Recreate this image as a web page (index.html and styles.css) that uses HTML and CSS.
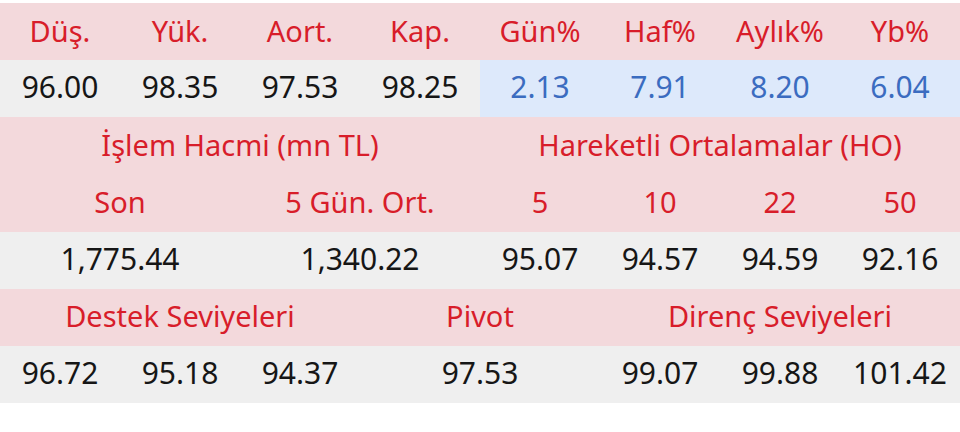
FILE: index.html
```html
<!DOCTYPE html>
<html lang="tr">
<head>
<meta charset="utf-8">
<title>Teknik Veriler</title>
<link rel="stylesheet" href="styles.css">
</head>
<body>
<table class="data">
  <colgroup>
    <col><col><col><col><col><col><col><col>
  </colgroup>
  <tbody>
    <tr class="head">
      <td>Düş.</td><td>Yük.</td><td>Aort.</td><td>Kap.</td>
      <td>Gün%</td><td>Haf%</td><td>Aylık%</td><td>Yb%</td>
    </tr>
    <tr class="vals">
      <td>96.00</td><td>98.35</td><td>97.53</td><td>98.25</td>
      <td class="pct">2.13</td><td class="pct">7.91</td><td class="pct">8.20</td><td class="pct">6.04</td>
    </tr>
    <tr class="head">
      <td colspan="4">İşlem Hacmi (mn TL)</td>
      <td colspan="4">Hareketli Ortalamalar (HO)</td>
    </tr>
    <tr class="head">
      <td colspan="2">Son</td><td colspan="2">5 Gün. Ort.</td>
      <td>5</td><td>10</td><td>22</td><td>50</td>
    </tr>
    <tr class="vals">
      <td colspan="2">1,775.44</td><td colspan="2">1,340.22</td>
      <td>95.07</td><td>94.57</td><td>94.59</td><td>92.16</td>
    </tr>
    <tr class="head">
      <td colspan="3">Destek Seviyeleri</td>
      <td colspan="2">Pivot</td>
      <td colspan="3">Direnç Seviyeleri</td>
    </tr>
    <tr class="vals">
      <td>96.72</td><td>95.18</td><td>94.37</td>
      <td colspan="2">97.53</td>
      <td>99.07</td><td>99.88</td><td>101.42</td>
    </tr>
  </tbody>
</table>
</body>
</html>
```

FILE: styles.css
```css
html, body {
  margin: 0;
  padding: 0;
  background: #ffffff;
}

body {
  padding-top: 3px;
  font-family: "Noto Sans", "Open Sans", sans-serif;
}

.data {
  width: 960px;
  table-layout: fixed;
  border-collapse: collapse;
  border-spacing: 0;
}

.data col {
  width: 120px;
}

.data td {
  height: 57.15px;
  padding: 0 0 3px 0;
  box-sizing: border-box;
  text-align: center;
  vertical-align: middle;
  line-height: 1;
  white-space: nowrap;
}

.head td {
  background: #f3d9dc;
  color: #d81d2a;
  font-size: 29px;
}

.vals td {
  background: #efefef;
  color: #161616;
  font-size: 30px;
}

.vals td.pct {
  background: #dde9fb;
  color: #3b6cc0;
}
```
